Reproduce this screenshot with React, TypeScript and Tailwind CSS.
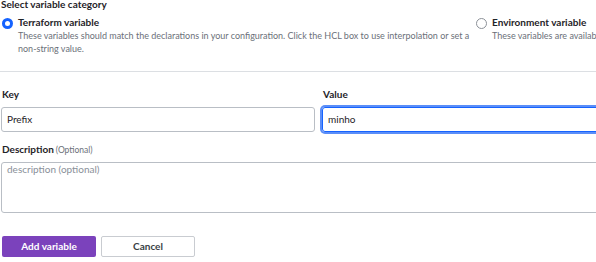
import React from "react";

export default function App() {
  const font = { fontFamily: 'Lato, "Noto Sans", sans-serif' };
  return (
    <div className="w-[596px] h-[262px] overflow-hidden bg-white text-[#1f2328]" style={font}>
      <div className="w-[640px]">
        <div className="-mt-[2px] h-[12px] text-[10px] leading-[12px] font-bold pl-[1px]">Select variable category</div>
        <div className="flex mt-[6px]">
          <div className="flex w-[484px] pl-[2px]">
            <div className="mt-[2px] w-[11px] h-[11px] rounded-full bg-[#1563ff] flex items-center justify-center shrink-0">
              <div className="w-[5px] h-[5px] rounded-full bg-white" />
            </div>
            <div className="ml-[5px]">
              <div className="text-[10px] leading-[13px] font-bold">Terraform variable</div>
              <div className="text-[9px] leading-[13px] text-[#6b7079] w-[456px]">
                These variables should match the declarations in your configuration. Click the HCL box to use interpolation or set a non-string value.
              </div>
            </div>
          </div>
          <div className="flex pl-[2px]">
            <div className="mt-[2px] w-[11px] h-[11px] rounded-full border border-[#8c9198] shrink-0" />
            <div className="ml-[5px]">
              <div className="text-[10px] leading-[13px] font-bold whitespace-nowrap">Environment variable</div>
              <div className="text-[9px] leading-[13px] text-[#6b7079] whitespace-nowrap">These variables are available in the Terraform runtime environment.</div>
            </div>
          </div>
        </div>
        <div className="mt-[16px] h-px bg-[#dcdfe3]" />
        <div className="grid grid-cols-[314px_1fr] gap-x-[7px] mt-[16px] pl-[1px]">
          <div>
            <div className="h-[12px] text-[10px] leading-[12px] font-bold pl-[1px]">Key</div>
            <div className="mt-[7px] h-[25px] border border-[#b9bec5] rounded-[3px] flex items-center px-[5px] text-[10px]">Prefix</div>
          </div>
          <div>
            <div className="h-[12px] text-[10px] leading-[12px] font-bold pl-[1px]">Value</div>
            <div className="mt-[7px] h-[25px] border border-[#1563ff] ring-2 ring-[#5b8ef8] rounded-[3px] flex items-center px-[5px] text-[10px]">minho</div>
          </div>
        </div>
        <div className="mt-[11px] pl-[1px]">
          <div className="h-[12px] text-[10px] leading-[12px] pl-[1px]"><span className="font-bold">Description</span><span className="ml-[2px] text-[8.5px] text-[#6b7079]">(Optional)</span></div>
          <div className="mt-[7px] h-[51px] border border-[#b9bec5] rounded-[3px] px-[5px] pt-0 text-[10px] leading-[12px] text-[#8a9099]">description (optional)</div>
        </div>
        <div className="flex gap-[5px] mt-[23px] pl-[2px]">
          <div className="w-[94px] h-[21px] bg-[#7b42bc] rounded-[2px] flex items-center justify-center text-white text-[10px] font-bold">Add variable</div>
          <div className="w-[94px] h-[21px] border border-[#c9ccd1] rounded-[2px] flex items-center justify-center text-[#3a3f45] text-[10px] font-bold">Cancel</div>
        </div>
      </div>
    </div>
  );
}
